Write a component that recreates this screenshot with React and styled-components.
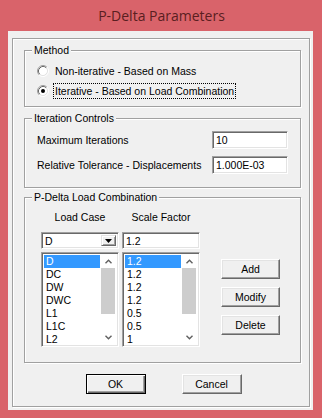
import React from "react";
import styled, { createGlobalStyle } from "styled-components";

const GlobalStyle = createGlobalStyle`
  body {
    margin: 0;
    background: #ffffff;
  }
  * {
    box-sizing: border-box;
  }
`;

const Window = styled.div`
  width: 322px;
  height: 418px;
  background-color: #d9636a;
  display: flex;
  flex-direction: column;
  padding: 0 9px 8px 8px;
  font-family: "Liberation Sans", Arial, sans-serif;
  font-size: 10.5px;
  color: #000;
`;
const TitleBar = styled.div`
  flex: 0 0 31px;
  display: flex;
  align-items: center;
  justify-content: center;
  padding-left: 2px;
  font-family: "Open Sans", "Noto Sans", sans-serif;
  font-size: 14px;
  color: #5a1e21;
`;
const Client = styled.div`
  flex: 1;
  display: flex;
  background-color: #f0f0f0;
  padding: 7px 3px 3px 4px;
`;
const Frame = styled.div`
  flex: 1;
  display: flex;
  flex-direction: column;
  border: 1px solid #a0a0a0;
  box-shadow: 1px 1px 0 #ffffff, inset 1px 1px 0 #ffffff;
  padding: 11px 8px 0 11px;
`;
const GroupBox = styled.div`
  position: relative;
  border: 1px solid #a0a0a0;
  box-shadow: 1px 1px 0 #ffffff, inset 1px 1px 0 #ffffff;
  margin-top: ${(props) => props.gap || 0}px;
  padding: ${(props) => props.pad};
`;
const Caption = styled.span`
  position: absolute;
  top: -7px;
  left: 7px;
  padding: 0 2px;
  line-height: 13px;
  background-color: #f0f0f0;
`;

const RadioRow = styled.div`
  height: 20px;
  display: flex;
  align-items: center;
  gap: 5px;
`;
const RadioLabel = styled.span`
  display: block;
  max-width: 183px;
  overflow: hidden;
  white-space: nowrap;
  line-height: 14px;
  padding: 0 1px;
  outline: ${(props) => (props.focused ? "1px dotted #000" : "none")};
`;

const FieldGrid = styled.div`
  display: grid;
  grid-template-columns: 175px 76px;
  row-gap: 7px;
  align-items: center;
`;
const Sunken = styled.div`
  border: 1px solid;
  border-color: #a0a0a0 #ffffff #ffffff #a0a0a0;
  box-shadow: inset 1px 1px 0 #696969, inset -1px -1px 0 #e3e3e3;
  background-color: #ffffff;
`;
const TextBox = styled(Sunken)`
  height: 18px;
  display: flex;
  align-items: center;
  padding: 0 3px;
`;

const ComboArea = styled.div`
  display: flex;
  align-items: flex-start;
`;
const Columns = styled.div`
  display: grid;
  grid-template-columns: 78px 78px;
  column-gap: 3px;
`;
const ColHeader = styled.div`
  height: 14px;
  line-height: 14px;
  text-align: center;
  margin-bottom: 8px;
`;
const Combo = styled(Sunken)`
  height: 17px;
  display: flex;
  align-items: stretch;
  padding: 2px 2px 2px 3px;
  margin-bottom: 3px;
`;
const ComboText = styled.span`
  flex: 1;
  line-height: 13px;
`;
const DropButton = styled.span`
  flex: 0 0 15px;
  display: flex;
  align-items: center;
  justify-content: center;
  background-color: #f0f0f0;
  border: 1px solid;
  border-color: #e3e3e3 #696969 #696969 #e3e3e3;
  box-shadow: inset 1px 1px 0 #ffffff, inset -1px -1px 0 #a0a0a0;
`;
const ListBox = styled(Sunken)`
  height: 95px;
  display: flex;
  padding: 2px;
`;
const Items = styled.div`
  flex: 1;
  display: flex;
  flex-direction: column;
`;
const Item = styled.div`
  height: 13px;
  line-height: 13px;
  padding-left: 2px;
  background-color: ${(props) => (props.selected ? "#3399ff" : "transparent")};
  color: ${(props) => (props.selected ? "#ffffff" : "#000000")};
`;
const ScrollBar = styled.div`
  flex: 0 0 16px;
  display: flex;
  flex-direction: column;
  background-color: #ffffff;
`;
const ScrollArrow = styled.div`
  flex: 0 0 13px;
  display: flex;
  align-items: center;
  justify-content: center;
`;
const Thumb = styled.div`
  flex: 0 0 46px;
  margin: 0 1px;
  background-color: #cdcdcd;
`;
const Track = styled.div`
  flex: 1;
`;

const SideButtons = styled.div`
  display: flex;
  flex-direction: column;
  gap: 8px;
  margin: 49px 0 0 21px;
`;
const Button = styled.button`
  width: ${(props) => props.w || 59}px;
  height: 20px;
  padding: 0;
  font-family: "Liberation Sans", Arial, sans-serif;
  font-size: 10.5px;
  color: #000;
  background-color: #f0f0f0;
  border: 1px solid;
  border-color: ${(props) =>
    props.primary ? "#000000" : "#ffffff #696969 #696969 #ffffff"};
  box-shadow: ${(props) =>
    props.primary
      ? "inset 1px 1px 0 #ffffff, inset -1px -1px 0 #696969, inset -2px -2px 0 #a0a0a0"
      : "inset -1px -1px 0 #a0a0a0, inset 1px 1px 0 #e3e3e3"};
`;
const Footer = styled.div`
  display: flex;
  justify-content: center;
  gap: 36px;
  margin-top: 11px;
  padding-left: 2px;
`;

function Radio({ checked }) {
  return (
    <svg width="12" height="12" viewBox="0 0 12 12">
      <circle cx="6" cy="6" r="4.5" fill="#ffffff" />
      <path d="M2.11 9.89 A5.5 5.5 0 0 1 9.89 2.11" fill="none" stroke="#a0a0a0" />
      <path d="M9.89 2.11 A5.5 5.5 0 0 1 2.11 9.89" fill="none" stroke="#ffffff" />
      <path d="M2.82 9.18 A4.5 4.5 0 0 1 9.18 2.82" fill="none" stroke="#696969" />
      <path d="M9.18 2.82 A4.5 4.5 0 0 1 2.82 9.18" fill="none" stroke="#e3e3e3" />
      {checked && <circle cx="6" cy="6" r="2" fill="#000000" />}
    </svg>
  );
}

function Chevron({ up }) {
  return (
    <svg width="7" height="5" viewBox="0 0 7 5">
      <path
        d={up ? "M0.5 4.2 L3.5 1.2 L6.5 4.2" : "M0.5 0.8 L3.5 3.8 L6.5 0.8"}
        fill="none"
        stroke="#606060"
        strokeWidth="1.4"
      />
    </svg>
  );
}

function List({ items }) {
  return (
    <ListBox>
      <Items>
        {items.map((item, i) => (
          <Item key={i} selected={i === 0}>
            {item}
          </Item>
        ))}
      </Items>
      <ScrollBar>
        <ScrollArrow>
          <Chevron up />
        </ScrollArrow>
        <Thumb />
        <Track />
        <ScrollArrow>
          <Chevron />
        </ScrollArrow>
      </ScrollBar>
    </ListBox>
  );
}

const loadCases = ["D", "DC", "DW", "DWC", "L1", "L1C", "L2"];
const factors = ["1.2", "1.2", "1.2", "1.2", "0.5", "0.5", "1"];

export default function App() {
  return (
    <>
      <GlobalStyle />
      <Window>
        <TitleBar>P-Delta Parameters</TitleBar>
        <Client>
          <Frame>
            <GroupBox pad="10px 0 5px 12px">
              <Caption>Method</Caption>
              <RadioRow>
                <Radio />
                <RadioLabel>Non-iterative - Based on Mass</RadioLabel>
              </RadioRow>
              <RadioRow>
                <Radio checked />
                <RadioLabel focused>Iterative - Based on Load Combination</RadioLabel>
              </RadioRow>
            </GroupBox>

            <GroupBox gap={11} pad="12px 0 13px 12px">
              <Caption>Iteration Controls</Caption>
              <FieldGrid>
                <span>Maximum Iterations</span>
                <TextBox>10</TextBox>
                <span>Relative Tolerance - Displacements</span>
                <TextBox>1.000E-03</TextBox>
              </FieldGrid>
            </GroupBox>

            <GroupBox gap={9} pad="12px 0 15px 16px">
              <Caption>P-Delta Load Combination</Caption>
              <ComboArea>
                <Columns>
                  <ColHeader>Load Case</ColHeader>
                  <ColHeader>Scale Factor</ColHeader>
                  <Combo>
                    <ComboText>D</ComboText>
                    <DropButton>
                      <svg width="7" height="4" viewBox="0 0 7 4">
                        <path d="M0 0 H7 L3.5 4 Z" fill="#000" />
                      </svg>
                    </DropButton>
                  </Combo>
                  <Combo>
                    <ComboText>1.2</ComboText>
                  </Combo>
                  <List items={loadCases} />
                  <List items={factors} />
                </Columns>
                <SideButtons>
                  <Button>Add</Button>
                  <Button>Modify</Button>
                  <Button>Delete</Button>
                </SideButtons>
              </ComboArea>
            </GroupBox>

            <Footer>
              <Button primary w={60}>
                OK
              </Button>
              <Button w={60}>Cancel</Button>
            </Footer>
          </Frame>
        </Client>
      </Window>
    </>
  );
}
